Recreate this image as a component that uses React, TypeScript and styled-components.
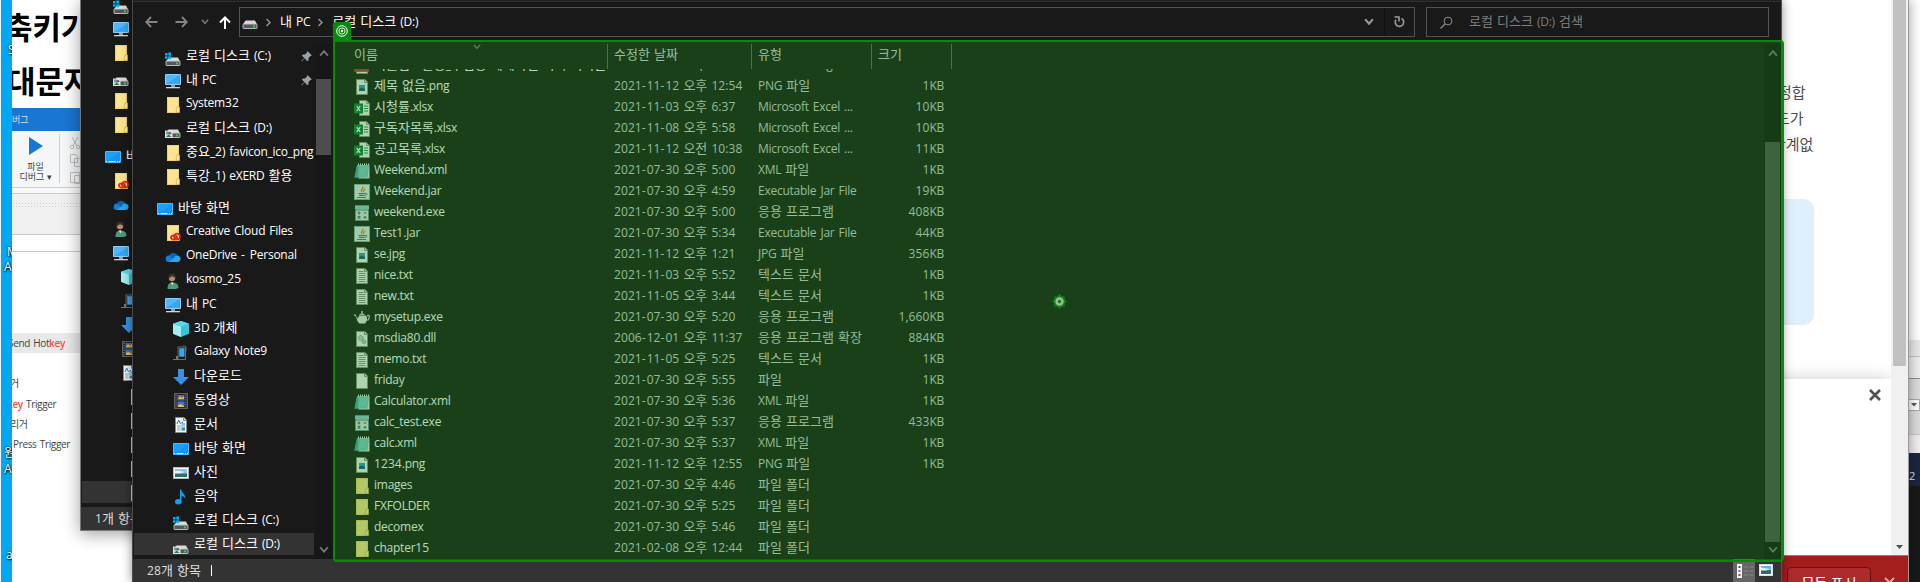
import React from 'react';
import styled, { createGlobalStyle, css } from 'styled-components';

const GlobalStyle = createGlobalStyle`
  *, *::before, *::after { box-sizing: border-box; }
  html, body { margin: 0; padding: 0; }
  body { overflow: hidden; }
  svg { display: block; flex: none; }
`;

/* ---------- text ---------- */

const Hangul = styled.span<{ $size: number }>`
  font-size: ${(p) => p.$size}px;
  letter-spacing: 0;
`;

const Digits = styled.span`
  letter-spacing: 0.08px;
`;

const TextLine = styled.span`
  font-family: 'Open Sans', 'Noto Sans CJK KR', sans-serif;
  font-size: 12px;
  line-height: 16px;
  letter-spacing: -0.25px;
  word-spacing: 1.2px;
  white-space: nowrap;
`;

const Hyphen = styled.span`
  letter-spacing: 1px;
`;

function Label({ text, size = 13 }: { text: string; size?: number }) {
  const runs = text.match(/[\uac00-\ud7a3]+|\d[\d:,]*|-|[^\uac00-\ud7a3\d-]+/g) ?? [];
  return (
    <TextLine>
      {runs.map((run, i) => {
        if (/[\uac00-\ud7a3]/.test(run)) {
          return (
            <Hangul key={i} $size={size}>
              {run}
            </Hangul>
          );
        }
        if (run === '-') return <Hyphen key={i}>-</Hyphen>;
        if (/\d/.test(run)) return <Digits key={i}>{run}</Digits>;
        return <React.Fragment key={i}>{run}</React.Fragment>;
      })}
    </TextLine>
  );
}

/* ---------- icons ---------- */

type IconName =
  | 'diskC' | 'diskD' | 'drive' | 'pc' | 'folder' | 'desktop' | 'cc' | 'onedrive' | 'user'
  | 'cube' | 'phone' | 'down' | 'video' | 'doc' | 'picture' | 'music'
  | 'png' | 'xlsx' | 'xml' | 'jar' | 'exe' | 'txt' | 'teapot' | 'dll' | 'blank' | 'pdf';

const Page = () => (
  <>
    <path d="M2.500.5h8.500l2.500 2.800v12.200h-11z" fill="#f7f7f7" stroke="#8a8a8a" />
    <path d="M10.500.5v3h3" fill="#ddd" stroke="#8a8a8a" />
  </>
);

const DriveBody = () => (
  <>
    <path d="M3.500 6.500h9.500l2 4h-14z" fill="#d9d9d9" />
    <rect x="1" y="10" width="14" height="4.500" rx=".6" fill="#55585a" stroke="#c9c9c9" strokeWidth=".9" />
    <rect x="11" y="11.500" width="2" height="1.800" fill="#2de03c" />
  </>
);

const FolderBody = () => (
  <>
    <path d="M2 0h12v16H2z" fill="#ffe48f" />
    <path d="M2.500.5h11v15h-11z" fill="none" stroke="#f2cf6b" />
    <path d="M12.200 10h2.300v5.500h-3.200v-3z" fill="#ffe9a6" stroke="#d9b23f" strokeWidth=".8" />
  </>
);

const glyphs: Record<IconName, React.ReactNode> = {
  diskC: (
    <>
      <DriveBody />
      <path d="M0 2h2.500v2.500H0zM3.300 1.500H6v3H3.300zM0 5.200h2.500v2.600H0zM3.300 5.200H6v3H3.300z" fill="#00b7f1" />
    </>
  ),
  diskD: (
    <>
      <DriveBody />
      <rect x="0" y="7.500" width="7.500" height="7.500" fill="#dfe3e5" />
      <path d="M1 8.500h3v3H1z" fill="#6f9ab5" />
      <path d="M1 14l2.500-2.500 3 2.500z" fill="#32705a" />
      <circle cx="5" cy="10.300" r="1.300" fill="#7d5546" />
    </>
  ),
  drive: <DriveBody />,
  pc: (
    <>
      <path d="M.5 1.500h15v10H.5z" fill="#4db8fb" stroke="#8fcdf2" />
      <path d="M1 11L15 2v9z" fill="#2f9df0" opacity=".7" />
      <path d="M6 12h4v2H6z" fill="#8ea1ad" />
      <path d="M1 14h14v1.300H1z" fill="#cfd8dd" />
    </>
  ),
  folder: <FolderBody />,
  desktop: (
    <>
      <path d="M.5 2.500h15v11H.5z" fill="#1aa1fb" stroke="#4cb9ff" />
      <path d="M1 13L15 3v10z" fill="#0b8cec" opacity=".6" />
      <path d="M1 12.500h14" stroke="#cfeaff" strokeDasharray="1 1.500 7 1.500 1 1" />
    </>
  ),
  cc: (
    <>
      <FolderBody />
      <g fill="none" stroke="#e2231a" strokeWidth="1.700">
        <ellipse cx="9" cy="12.500" rx="3" ry="2.100" />
        <ellipse cx="12" cy="11.500" rx="3" ry="2.800" />
      </g>
      <path d="M9 11.500l3.500 2" stroke="#e2231a" strokeWidth="1.300" />
    </>
  ),
  onedrive: (
    <>
      <path d="M3.500 8a4.800 4.800 0 0 1 9-1.500l-4 5z" fill="#0a64b8" />
      <path d="M3.300 13A3.300 3.300 0 0 1 3.500 6.500L11 12z" fill="#1081d6" />
      <path d="M9 9a3.500 3.500 0 0 1 4-2.300 3.200 3.200 0 0 1 0 6.300H3.500z" fill="#2aa5ee" />
    </>
  ),
  user: (
    <>
      <path d="M2.500 16c0-5 2-6.500 4.500-6.500S13.500 10 13.500 15l-3 1z" fill="#4f9a78" />
      <path d="M6 9.500l1.500 3 1-3z" fill="#e6efe9" />
      <circle cx="7" cy="5" r="3.200" fill="#b98a6c" />
      <path d="M3.500 6C3 1 6 0 8 .5s3 2 2 4.500C9 3 6 3 5 4.500z" fill="#3a2f2b" />
    </>
  ),
  cube: (
    <>
      <path d="M8 0l8 2.800v10L8 16l-8-3.200v-10z" fill="#35c4d8" />
      <path d="M0 2.800L8 5.500V16l-8-3.200z" fill="#a3eef3" />
      <path d="M0 2.800L8 0l8 2.800-8 2.700z" fill="#5cdbe6" />
    </>
  ),
  phone: (
    <>
      <path d="M9 1.500c4-2.500 6 1 4 5" fill="none" stroke="#444" />
      <rect x="5" y="2" width="7.500" height="12.500" fill="#1b1b1b" stroke="#6b6b6b" />
      <rect x="6.200" y="3.200" width="5.300" height="8.500" fill="#3ba4f2" />
      <path d="M0 14h3v-3h2v4H0z" fill="#777" />
    </>
  ),
  down: <path d="M5 0h6v8h5l-8 8-8-8h5z" fill="#3592e6" />,
  video: (
    <>
      <rect x="1.500" y=".5" width="13" height="15" fill="#242424" stroke="#5f5f5f" />
      <path d="M3 1.500v13M13 1.500v13" stroke="#8b8b8b" strokeWidth="1.200" strokeDasharray="1.200 1.200" />
      <rect x="4.500" y="2" width="7" height="5.500" fill="#4d67bd" />
      <rect x="4.500" y="8.500" width="7" height="5.500" fill="#3a75d4" />
      <path d="M5 6l2-3 2 2 2-2v3z" fill="#e3bf36" />
      <path d="M5 12l3-1 3 2v1H5z" fill="#e9c13b" />
    </>
  ),
  doc: (
    <>
      <Page />
      <path d="M4 7l1.700-4L7.500 7M8.500 5.500H10M8.500 7H12" stroke="#1f7cc7" fill="none" />
      <path d="M4 9h8M4 11h3.500M4 13h3.500" stroke="#6ea9d4" />
      <rect x="8.500" y="10.500" width="3.500" height="3" fill="#3f8b8c" />
    </>
  ),
  picture: (
    <>
      <rect x=".5" y="2.500" width="15" height="11" fill="#f8f8f8" stroke="#b9b9b9" />
      <rect x="2" y="4" width="12" height="8" fill="#8ec2ea" />
      <path d="M2 8c4-1.500 6 1 12 .5V12H2z" fill="#34706b" />
      <path d="M2 6.500c3-2 7 1 10 0l-4 2H2z" fill="#e9f4fb" />
    </>
  ),
  music: (
    <>
      <path d="M8.200 1c.8 3.200 4.500 4 4 9-.7-2-2-3-4-3.200z" fill="#10a0f5" />
      <path d="M7.700.5v12" stroke="#10a0f5" strokeWidth="1.500" />
      <ellipse cx="5.300" cy="12.800" rx="3.300" ry="2.700" fill="#10a0f5" />
    </>
  ),
  png: (
    <>
      <Page />
      <rect x="5" y="6" width="6" height="6" fill="#2d97d3" />
      <path d="M5 10l2.500-1.500L11 10v2H5z" fill="#17517c" />
    </>
  ),
  xlsx: (
    <>
      <path d="M5.500.5h7l3 3v12h-10z" fill="#f7f7f7" stroke="#8a8a8a" />
      <path d="M12.500.5v3h3" fill="none" stroke="#8a8a8a" />
      <path d="M10 6h4M10 8.500h4M10 11h4" stroke="#23915c" strokeWidth="1.200" />
      <rect x="0" y="3.500" width="9" height="10" fill="#0f7a3e" />
      <path d="M2.800 6l3.400 5M6.200 6l-3.400 5" stroke="#fff" strokeWidth="1.300" />
    </>
  ),
  xml: (
    <>
      <path d="M4 15.500h11.500V2z" fill="#e0e4e2" />
      <path d="M3 2h12l-1.500 12.500H.5z" fill="#74c6c8" />
      <path d="M3 2L.5 14.500h3L4.500 2z" fill="#4c9fa6" />
      <path d="M4 1.500h11" stroke="#e8eeee" strokeWidth="2" strokeDasharray="1 1" />
      <path d="M6 5h7M6 7h7M5.500 9h7M5.500 11h7" stroke="#a3dedd" strokeWidth=".6" />
    </>
  ),
  jar: (
    <>
      <rect x=".5" y=".5" width="15" height="15" fill="#e4eaf0" stroke="#8fa8ba" />
      <path d="M8 8c-2.500-2 2-3.500 .8-5.500M9.500 8c-1-1.500 1.500-2 1.500-3.500" fill="none" stroke="#e0871d" strokeWidth="1.300" />
      <path d="M4.500 9.500h6.500M5 11.300h5.500M3 13.500h9" stroke="#4a6f8c" strokeWidth="1.200" />
      <path d="M11 9.500c2.500-.8 2.500 1.800 0 2" fill="none" stroke="#4a6f8c" />
    </>
  ),
  exe: (
    <>
      <rect x="1.500" y=".5" width="13" height="15" fill="#dfe7ea" stroke="#6f8c96" />
      <rect x="1" y="1" width="14" height="3" fill="#8fcdd2" />
      <path d="M1 5h14" stroke="#56747c" />
      <path d="M3.500 8h3M5 6.500v3M9.500 8h3M3.700 11l2.600 2.600M6.300 11l-2.600 2.600M9.500 12.300h3M11 10.900v2.800" stroke="#4c5f66" strokeWidth="1.100" />
    </>
  ),
  txt: (
    <>
      <Page />
      <path d="M4.500 3.500h5M4.500 5.500h7M4.500 7.500h7M4.500 9.500h7M4.500 11.500h7M4.500 13.500h7" stroke="#7d8487" strokeWidth=".9" />
    </>
  ),
  teapot: (
    <>
      <path d="M2 6L0 4.500M13 6c3-2 3 2 .5 4.500" fill="none" stroke="#d8dcd9" strokeWidth="1.200" />
      <path d="M1 4.500l3 4 1-3h7c2 3 1 6-1 8H5.500C3.500 12 3 10 2.500 8z" fill="#e3e7e4" />
      <path d="M5 5c1-2 5-2 6 0z" fill="#c9d0cc" />
      <rect x="7.300" y="1" width="1.400" height="2.600" fill="#e3e7e4" />
    </>
  ),
  dll: (
    <>
      <Page />
      <circle cx="6.800" cy="7" r="2.600" fill="#c4cdd2" stroke="#7d8d96" strokeDasharray="1 .6" />
      <circle cx="10" cy="10.800" r="2" fill="#a9c9d3" stroke="#7d8d96" strokeDasharray="1 .6" />
    </>
  ),
  blank: <Page />,
  pdf: (
    <>
      <Page />
      <rect x="0" y="9" width="15" height="4.800" fill="#d3222a" />
    </>
  ),
};

const Icon = ({ name }: { name: IconName }) => (
  <svg width="16" height="16" viewBox="0 0 16 16">
    {glyphs[name]}
  </svg>
);

const Chevron = ({ dir, color, size = 8, weight = 1.8 }: { dir: 'up' | 'down' | 'right'; color: string; size?: number; weight?: number }) => {
  const d = { up: 'M1 6l3.500-4L8 6', down: 'M1 2l3.500 4L8 2', right: 'M2.500 1l3.500 3.500-3.500 3.500' }[dir];
  return (
    <svg width={size} height={size} viewBox="0 0 9 9">
      <path d={d} fill="none" stroke={color} strokeWidth={weight} />
    </svg>
  );
};

/* ---------- desktop and windows behind ---------- */

const Desktop = styled.div`
  position: relative;
  width: 1920px;
  height: 582px;
  overflow: hidden;
  background: #00a8f3;
  border-left: 1px solid #eef4f8;
  font-family: 'Open Sans', 'Noto Sans CJK KR', sans-serif;
`;

const DesktopCaption = styled.span<{ $x: number; $y: number }>`
  position: absolute;
  left: ${(p) => p.$x}px;
  top: ${(p) => p.$y}px;
  font-size: 12px;
  line-height: 16px;
  color: #fff;
  text-shadow: 1px 1px 2px #000, 0 0 2px #000;
`;

const Win = styled.div<{ $x: number; $w: number; $h: number }>`
  position: absolute;
  top: 0;
  left: ${(p) => p.$x - 1}px;
  width: ${(p) => p.$w}px;
  height: ${(p) => p.$h}px;
  display: flex;
  flex-direction: column;
  overflow: hidden;
`;

const Article = styled(Win)`
  background: #fff;
`;

const Heading = styled.div<{ $shift: number }>`
  height: 54px;
  margin-left: ${(p) => p.$shift}px;
  font-family: 'Noto Sans CJK KR', sans-serif;
  font-weight: 700;
  font-size: 31px;
  line-height: 51px;
  color: #000;
  white-space: nowrap;
`;

const TabStrip = styled.div`
  height: 23px;
  background: #1976d2;
  color: #cfe3f7;
  font-size: 9px;
  line-height: 23px;
  white-space: nowrap;
`;

const Ribbon = styled.div`
  height: 57px;
  display: flex;
  background: #f5f6f7;
  border-bottom: 1px solid #c9cccf;
`;

const RibbonButton = styled.div`
  width: 47px;
  padding: 6px 0 0 0;
  display: flex;
  flex-direction: column;
  align-items: center;
  font-size: 9px;
  line-height: 10px;
  color: #444;
  white-space: nowrap;
  svg { margin-bottom: 7px; }
`;

const RibbonRule = styled.div`
  width: 1px;
  height: 49px;
  margin-top: 3px;
  background: #cfcfcf;
`;

const RibbonIcons = styled.div`
  padding: 5px 0 0 9px;
`;

const GrayBand = styled.div<{ $h: number; $bg: string }>`
  height: ${(p) => p.$h}px;
  background: ${(p) => p.$bg};
  border-bottom: 1px solid #cacaca;
`;

const Grip = styled.div`
  height: 5px;
  margin-top: 8px;
  background: radial-gradient(circle, #cfcfcf 0.8px, transparent 1px) 0 0 / 3px 3px;
`;

const CodeRow = styled.div<{ $h: number; $shift?: number; $hot?: boolean }>`
  height: ${(p) => p.$h}px;
  padding-left: ${(p) => p.$shift ?? 0}px;
  font-size: 10px;
  line-height: ${(p) => p.$h + 1}px;
  letter-spacing: -0.35px;
  word-spacing: 1px;
  color: #444;
  white-space: nowrap;
  background: ${(p) => (p.$hot ? '#e9e9e9' : 'transparent')};
  b { color: #f4523f; font-weight: 600; }
`;

const Spacer = styled.div<{ $h: number }>`
  flex: none;
  height: ${(p) => p.$h}px;
`;

const CodeText = styled.span<{ $shift: number }>`
  margin-left: ${(p) => p.$shift}px;
`;

/* ---------- explorer windows ---------- */

const BackExplorer = styled(Win)`
  background: #191919;
  border-left: 1px solid #777;
  border-bottom: 1px solid #777;
  box-shadow: 0 3px 16px rgba(0, 0, 0, 0.38);
`;

const BackTree = styled.div`
  flex: 1;
  margin-top: -8px;
`;

const TreeRow = styled.div<{ $indent: number; $selected?: boolean; $gap?: boolean }>`
  height: 24px;
  ${(p) => p.$gap && css`margin-top: 8px;`}
  padding-left: ${(p) => p.$indent}px;
  display: flex;
  align-items: center;
  gap: 5px;
  color: #fff;
  overflow: hidden;
  ${(p) =>
    p.$selected &&
    css`
      background: linear-gradient(#333, #333) 1px 1px / 180px 22px no-repeat;
    `}
  & > span { flex: 1; transform: translateY(-1px); }
`;

const IconDrop = styled.div<{ $drop: boolean }>`
  flex: none;
  margin-top: ${(p) => (p.$drop ? 5 : 1)}px;
`;

const StatusBar = styled.div`
  flex: none;
  height: 23px;
  display: flex;
  align-items: center;
  padding-left: 14px;
  color: #dedede;
  background: #333;
`;

const Caret = styled.div`
  width: 1px;
  height: 11px;
  margin-left: 10px;
  background: #fff;
`;

const ViewSwitch = styled.div`
  margin-left: auto;
  height: 100%;
  display: flex;
  align-items: flex-start;
  gap: 4px;
`;

const ViewButton = styled.div<{ $on?: boolean }>`
  width: 22px;
  height: 23px;
  padding: 5px 0 0 ${(p) => (p.$on ? 4 : 0)}px;
  background: ${(p) => (p.$on ? '#666' : 'transparent')};
`;

const Explorer = styled(Win)`
  background: #191919;
  border-left: 1px solid #4a4a4a;
  border-right: 1px solid #555;
  box-shadow: 0 0 10px rgba(0, 0, 0, 0.45);
`;

const TopEdge = styled.div`
  flex: none;
  height: 2px;
  background: #202020;
  border-bottom: 1px solid #303030;
`;

const Toolbar = styled.div`
  flex: none;
  height: 42px;
  display: flex;
  align-items: flex-start;
  padding-top: 5px;
`;

const NavButtons = styled.div`
  width: 106px;
  height: 30px;
  padding-left: 12px;
  display: flex;
  align-items: center;
`;

const NavSlot = styled.div<{ $w: number }>`
  width: ${(p) => p.$w}px;
`;

const Field = styled.div<{ $w: number }>`
  width: ${(p) => p.$w}px;
  height: 30px;
  display: flex;
  align-items: center;
  border: 1px solid #535353;
  color: #fff;
  & > span { transform: translateY(-1px); }
`;

const Address = styled(Field)`
  padding-left: 2px;
  svg + svg { margin-left: 6px; }
`;

const Crumb = styled.div<{ $l: number; $r: number }>`
  display: flex;
  margin: -2px ${(p) => p.$r}px 0 ${(p) => p.$l}px;
`;

const AddressTail = styled.div`
  margin-left: auto;
  height: 28px;
  display: flex;
  align-items: center;
`;

const Refresh = styled.div`
  width: 30px;
  height: 28px;
  margin-left: 10px;
  display: flex;
  align-items: center;
  justify-content: center;
  border-left: 1px solid #111;
`;

const Search = styled(Field)`
  margin-left: 11px;
  padding-left: 13px;
  gap: 16px;
  color: #7f7f7f;
`;

const Body = styled.div`
  flex: 1;
  min-height: 0;
  display: flex;
`;

const NavPane = styled.div`
  width: 182px;
  overflow: hidden;
`;

const Pin = styled.div`
  margin-right: 3px;
`;

const Scroll = styled.div<{ $bg: string }>`
  width: 17px;
  padding: 5px 1px 4px;
  display: flex;
  flex-direction: column;
  align-items: center;
  background: ${(p) => p.$bg};
`;

const Thumb = styled.div<{ $top: number; $h: number }>`
  width: 15px;
  height: ${(p) => p.$h}px;
  margin-top: ${(p) => p.$top}px;
  margin-bottom: auto;
  background: #4d4d4d;
`;

const FilePane = styled.div`
  flex: 1;
  display: flex;
  flex-direction: column;
  overflow: hidden;
`;

const columns = '254px 144px 120px 80px';

const HeaderRow = styled.div`
  position: relative;
  flex: none;
  height: 25px;
  display: grid;
  grid-template-columns: ${columns};
  padding-left: 22px;
  color: #d4d4d4;
`;

const HeaderCell = styled.div`
  padding: 0 0 4px 6px;
  display: flex;
  align-items: center;
  border-right: 1px solid #636363;
  &:first-child { padding-left: 0; }
`;

const SortMark = styled.div`
  position: absolute;
  left: 141px;
  top: -1px;
`;

const Files = styled.div`
  flex: 1;
  min-height: 0;
  overflow: hidden;
`;

const FileRow = styled.div`
  height: 21px;
  display: grid;
  grid-template-columns: ${columns};
  align-items: center;
  padding-left: 22px;
  color: #d2d2d2;
  &:first-child { margin-top: -14px; }
`;

const Cell = styled.div<{ $right?: boolean }>`
  padding: 0 ${(p) => (p.$right ? 8 : 0)}px 2px 6px;
  display: flex;
  white-space: nowrap;
  justify-content: ${(p) => (p.$right ? 'flex-end' : 'flex-start')};
`;

const NameCell = styled.div`
  display: flex;
  align-items: center;
  gap: 4px;
  color: #fff;
  & > span { transform: translateY(-1px); }
`;

/* ---------- browser at the right ---------- */

const Browser = styled(Win)`
  background: #fff;
  border-right: 1px solid #9a9a9a;
  box-shadow: 0 0 12px rgba(0, 0, 0, 0.4);
`;

const BrowserView = styled.div`
  height: 555px;
  display: flex;
`;

const WebPage = styled.div`
  width: 191px;
  display: flex;
  flex-direction: column;
  padding-top: 79px;
`;

const Prose = styled.div<{ $x: number }>`
  height: 26px;
  padding-left: ${(p) => p.$x}px;
  font-size: 15px;
  line-height: 26px;
  color: #4a4d52;
  white-space: nowrap;
`;

const Callout = styled.div`
  width: 114px;
  height: 126px;
  margin-top: 42px;
  border-radius: 10px;
  background: #e0effc;
`;

const Sheet = styled.div`
  height: 176px;
  margin-top: auto;
  padding: 10px 10px 0 0;
  display: flex;
  justify-content: flex-end;
  align-items: flex-start;
  background: #fff;
  box-shadow: 0 0 16px rgba(0, 0, 0, 0.2);
`;

const LightScroll = styled.div`
  position: relative;
  width: 17px;
  display: flex;
  flex-direction: column;
  align-items: center;
  padding-bottom: 6px;
  background: #f0f0f0;
`;

const LightThumb = styled.div`
  width: 13px;
  height: 366px;
  margin-bottom: auto;
  background: #c1c1c1;
`;

const RedBar = styled.div`
  height: 27px;
  display: flex;
  align-items: flex-start;
  padding: 11px 0 0 87px;
  background: #a61d1e;
  border-top: 1px solid #bb6a6a;
`;

const RedButton = styled.div`
  width: 84px;
  height: 32px;
  border: 1px solid #651515;
  border-radius: 4px;
  background: #ad2b2c;
  color: #fff;
  font-size: 14px;
  line-height: 30px;
  text-align: center;
  white-space: nowrap;
`;

const RedClose = styled.div`
  margin: 10px 0 0 13px;
`;

const EdgeApps = styled(Win)`
  background: #fff;
`;

const Strip = styled.div<{ $h: number; $bg: string; $line?: string }>`
  flex: none;
  height: ${(p) => p.$h}px;
  background: ${(p) => p.$bg};
  border-bottom: ${(p) => (p.$line ? `1px solid ${p.$line}` : '0')};
`;

const MiniSelect = styled.div`
  height: 12px;
  margin-top: 19px;
  display: flex;
  align-items: center;
  justify-content: center;
  border: 1px solid #aaa;
  background: #fff;
`;

const NavyStrip = styled.div`
  height: 33px;
  padding: 14px 0 0 1px;
  background: #1b2740;
  color: #e3e6ec;
  font-size: 11px;
  line-height: 18px;
`;

/* ---------- region marker ---------- */

const Region = styled.div`
  position: absolute;
  left: 332px;
  top: 40px;
  width: 1451px;
  height: 522px;
  border: 2px solid #078a0b;
  border-radius: 0 4px 4px 4px;
  background: rgba(28, 144, 28, 0.335);
  background-clip: padding-box;
`;

const RegionBadge = styled.div`
  position: absolute;
  left: -2px;
  top: -20px;
  width: 18px;
  height: 20px;
  padding: 3px 0 0 3px;
  border-radius: 3px 3px 0 0;
  background: #078a0b;
`;

const RegionTarget = styled.div`
  position: absolute;
  left: 717px;
  top: 252px;
`;

/* ---------- data ---------- */

type TreeItem = { icon: IconName; text: string; level: number; pin?: boolean; gap?: boolean; selected?: boolean };

const tree: TreeItem[] = [
  { icon: 'diskC', text: '로컬 디스크 (C:)', level: 1, pin: true },
  { icon: 'pc', text: '내 PC', level: 1, pin: true },
  { icon: 'folder', text: 'System32', level: 1 },
  { icon: 'diskD', text: '로컬 디스크 (D:)', level: 1 },
  { icon: 'folder', text: '중요_2) favicon_ico_png', level: 1 },
  { icon: 'folder', text: '특강_1) eXERD 활용', level: 1 },
  { icon: 'desktop', text: '바탕 화면', level: 0, gap: true },
  { icon: 'cc', text: 'Creative Cloud Files', level: 1 },
  { icon: 'onedrive', text: 'OneDrive - Personal', level: 1 },
  { icon: 'user', text: 'kosmo_25', level: 1 },
  { icon: 'pc', text: '내 PC', level: 1 },
  { icon: 'cube', text: '3D 개체', level: 2 },
  { icon: 'phone', text: 'Galaxy Note9', level: 2 },
  { icon: 'down', text: '다운로드', level: 2 },
  { icon: 'video', text: '동영상', level: 2 },
  { icon: 'doc', text: '문서', level: 2 },
  { icon: 'desktop', text: '바탕 화면', level: 2 },
  { icon: 'picture', text: '사진', level: 2 },
  { icon: 'music', text: '음악', level: 2 },
  { icon: 'diskC', text: '로컬 디스크 (C:)', level: 2 },
  { icon: 'diskD', text: '로컬 디스크 (D:)', level: 2, selected: true },
];

type BackItem = { icon: IconName; indent: number; gap?: boolean; text?: string; selected?: boolean };

const backTree: BackItem[] = [
  { icon: 'diskC', indent: 32 },
  { icon: 'pc', indent: 32 },
  { icon: 'folder', indent: 32 },
  { icon: 'diskD', indent: 32 },
  { icon: 'folder', indent: 32 },
  { icon: 'folder', indent: 32 },
  { icon: 'desktop', indent: 24, gap: true, text: '바' },
  { icon: 'cc', indent: 32 },
  { icon: 'onedrive', indent: 32 },
  { icon: 'user', indent: 32 },
  { icon: 'pc', indent: 32 },
  { icon: 'cube', indent: 40 },
  { icon: 'phone', indent: 40 },
  { icon: 'down', indent: 40 },
  { icon: 'video', indent: 40 },
  { icon: 'doc', indent: 40 },
  { icon: 'folder', indent: 48 },
  { icon: 'folder', indent: 48 },
  { icon: 'folder', indent: 48 },
  { icon: 'folder', indent: 48 },
  { icon: 'folder', indent: 48, selected: true },
];

const files: [IconName, string, string, string, string][] = [
  ['pdf', '이클립스활용_수업용 예제파일 목록 복사본', '2021-11-12 오후 5:20', 'Microsoft Edge P...', ''],
  ['png', '제목 없음.png', '2021-11-12 오후 12:54', 'PNG 파일', '1KB'],
  ['xlsx', '시청률.xlsx', '2021-11-03 오후 6:37', 'Microsoft Excel ...', '10KB'],
  ['xlsx', '구독자목록.xlsx', '2021-11-08 오후 5:58', 'Microsoft Excel ...', '10KB'],
  ['xlsx', '공고목록.xlsx', '2021-11-12 오전 10:38', 'Microsoft Excel ...', '11KB'],
  ['xml', 'Weekend.xml', '2021-07-30 오후 5:00', 'XML 파일', '1KB'],
  ['jar', 'Weekend.jar', '2021-07-30 오후 4:59', 'Executable Jar File', '19KB'],
  ['exe', 'weekend.exe', '2021-07-30 오후 5:00', '응용 프로그램', '408KB'],
  ['jar', 'Test1.jar', '2021-07-30 오후 5:34', 'Executable Jar File', '44KB'],
  ['png', 'se.jpg', '2021-11-12 오후 1:21', 'JPG 파일', '356KB'],
  ['txt', 'nice.txt', '2021-11-03 오후 5:52', '텍스트 문서', '1KB'],
  ['txt', 'new.txt', '2021-11-05 오후 3:44', '텍스트 문서', '1KB'],
  ['teapot', 'mysetup.exe', '2021-07-30 오후 5:20', '응용 프로그램', '1,660KB'],
  ['dll', 'msdia80.dll', '2006-12-01 오후 11:37', '응용 프로그램 확장', '884KB'],
  ['txt', 'memo.txt', '2021-11-05 오후 5:25', '텍스트 문서', '1KB'],
  ['blank', 'friday', '2021-07-30 오후 5:55', '파일', '1KB'],
  ['xml', 'Calculator.xml', '2021-07-30 오후 5:36', 'XML 파일', '1KB'],
  ['exe', 'calc_test.exe', '2021-07-30 오후 5:37', '응용 프로그램', '433KB'],
  ['xml', 'calc.xml', '2021-07-30 오후 5:37', 'XML 파일', '1KB'],
  ['png', '1234.png', '2021-11-12 오후 12:55', 'PNG 파일', '1KB'],
  ['folder', 'images', '2021-07-30 오후 4:46', '파일 폴더', ''],
  ['folder', 'FXFOLDER', '2021-07-30 오후 5:25', '파일 폴더', ''],
  ['folder', 'decomex', '2021-07-30 오후 5:46', '파일 폴더', ''],
  ['folder', 'chapter15', '2021-02-08 오후 12:44', '파일 폴더', ''],
];

const isDrive = (icon: IconName) => icon === 'diskC' || icon === 'diskD';

/* ---------- sections ---------- */

const ArticleWindow = () => (
  <Article $x={12} $w={200} $h={582}>
    <Heading $shift={-8}>축키가</Heading>
    <Heading $shift={-5}>대문자</Heading>
    <TabStrip>버그</TabStrip>
    <Ribbon>
      <RibbonButton>
        <svg width="14" height="18" viewBox="0 0 14 18">
          <path d="M0 0l14 9-14 9z" fill="#1976d2" />
        </svg>
        <span>파일</span>
        <span>디버그 ▾</span>
      </RibbonButton>
      <RibbonRule />
      <RibbonIcons>
        <svg width="16" height="50" viewBox="0 0 16 50" fill="none" stroke="#bdbdbd">
          <path d="M3 1l5 9M9 1L4 10" />
          <circle cx="3" cy="11" r="1.700" />
          <circle cx="9" cy="11" r="1.700" />
          <path d="M1.500 18.500h5l2 2v6h-7zM5.500 22.500h5l2 2v6h-7zM1.500 36.500h9v10h-9zM5.500 39.500h8v8h-8z" fill="#f5f6f7" />
        </svg>
      </RibbonIcons>
    </Ribbon>
    <GrayBand $h={6} $bg="#f8f8f8" />
    <GrayBand $h={41} $bg="#f0f0f0">
      <Grip />
    </GrayBand>
    <GrayBand $h={17} $bg="#fff" />
    <Spacer $h={81} />
    <CodeRow $h={20} $hot>
      <CodeText $shift={-4}>Send Hot<b>key</b></CodeText>
    </CodeRow>
    <Spacer $h={20} />
    <CodeRow $h={20}>
      <CodeText $shift={-2}>거</CodeText>
    </CodeRow>
    <CodeRow $h={22}>
      <CodeText $shift={-5}><b>key</b> Trigger</CodeText>
    </CodeRow>
    <CodeRow $h={18}>
      <CodeText $shift={-2}>리거</CodeText>
    </CodeRow>
    <CodeRow $h={22} $shift={1}>Press Trigger</CodeRow>
  </Article>
);

const BackExplorerWindow = () => (
  <BackExplorer $x={80} $w={300} $h={531}>
    <BackTree>
      {backTree.map((item, i) => (
        <TreeRow key={i} $indent={item.indent} $gap={item.gap} $selected={item.selected}>
          <IconDrop $drop={isDrive(item.icon)}>
            <Icon name={item.icon} />
          </IconDrop>
          {item.text && <Label text={item.text} />}
        </TreeRow>
      ))}
    </BackTree>
    <StatusBar>
      <Label text="1개 항목" />
    </StatusBar>
  </BackExplorer>
);

const BrowserWindow = () => (
  <Browser $x={1700} $w={209} $h={582}>
    <BrowserView>
      <WebPage>
        <Prose $x={78}>정합</Prose>
        <Prose $x={76}>도가</Prose>
        <Prose $x={72}>관계없</Prose>
        <Callout />
        <Sheet>
          <svg width="12" height="12" viewBox="0 0 12 12">
            <path d="M1 1l10 10M11 1L1 11" stroke="#505050" strokeWidth="2.600" />
          </svg>
        </Sheet>
      </WebPage>
      <LightScroll>
        <LightThumb />
        <svg width="7" height="4" viewBox="0 0 7 4">
          <path d="M0 0h7L3.500 4z" fill="#505050" />
        </svg>
      </LightScroll>
    </BrowserView>
    <RedBar>
      <RedButton>모두 표시</RedButton>
      <RedClose>
        <svg width="11" height="11" viewBox="0 0 11 11">
          <path d="M1 1l9 9M10 1L1 10" stroke="#d9a9a9" strokeWidth="2" />
        </svg>
      </RedClose>
    </RedBar>
  </Browser>
);

const EdgeWindow = () => (
  <EdgeApps $x={1900} $w={20} $h={582}>
    <Strip $h={340} $bg="#fff" />
    <Strip $h={17} $bg="#e9e9e9" $line="#c4c4c4" />
    <Strip $h={22} $bg="#efefef" $line="#8d8d8d" />
    <Strip $h={56} $bg="#dcdcdf" $line="#c4c4c4">
      <Spacer $h={1} />
      <MiniSelect>
        <svg width="26" height="4" viewBox="0 0 26 4">
          <path d="M14 0h6l-3 3.500z" fill="#555" />
        </svg>
      </MiniSelect>
    </Strip>
    <Strip $h={18} $bg="#f3eeee" />
    <NavyStrip>
      <CodeText $shift={8}>2</CodeText>
    </NavyStrip>
    <Strip $h={96} $bg="#191919" />
  </EdgeApps>
);

const ExplorerToolbar = () => (
  <Toolbar>
    <NavButtons>
      <NavSlot $w={30}>
        <svg width="13" height="12" viewBox="0 0 13 12">
          <path d="M6 1L1.200 6 6 11M1.500 6h11" fill="none" stroke="#848484" strokeWidth="1.900" />
        </svg>
      </NavSlot>
      <NavSlot $w={26}>
        <svg width="13" height="12" viewBox="0 0 13 12">
          <path d="M7 1l4.800 5L7 11M11.500 6H.5" fill="none" stroke="#848484" strokeWidth="1.900" />
        </svg>
      </NavSlot>
      <NavSlot $w={18}>
        <Chevron dir="down" color="#777" />
      </NavSlot>
      <svg width="12" height="13" viewBox="0 0 12 13">
        <path d="M1 6.500L6 1.500l5 5M6 2v11" fill="none" stroke="#fff" strokeWidth="2" />
      </svg>
    </NavButtons>
    <Address $w={1176}>
      <Icon name="drive" />
      <Chevron dir="right" color="#999" size={9} weight={1.4} />
      <Crumb $l={7} $r={6}>
        <Label text="내 PC" />
      </Crumb>
      <Chevron dir="right" color="#999" size={9} weight={1.4} />
      <Crumb $l={7} $r={0}>
        <Label text="로컬 디스크 (D:)" />
      </Crumb>
      <AddressTail>
        <Chevron dir="down" color="#999" size={10} />
        <Refresh>
          <svg width="11" height="12" viewBox="0 0 11 12">
            <path d="M7.500 2.500A4.200 4.200 0 1 1 2 3.800" fill="none" stroke="#9c9c9c" strokeWidth="1.600" />
            <path d="M.5 1h4.500v4.500" fill="none" stroke="#9c9c9c" strokeWidth="1.600" />
          </svg>
        </Refresh>
      </AddressTail>
    </Address>
    <Search $w={343}>
      <svg width="13" height="13" viewBox="0 0 13 13">
        <circle cx="8" cy="5" r="3.900" fill="none" stroke="#8d8d8d" />
        <path d="M5 8L.5 12.500" stroke="#8d8d8d" strokeWidth="1.200" />
      </svg>
      <Label text="로컬 디스크 (D:) 검색" />
    </Search>
  </Toolbar>
);

const ExplorerWindow = () => (
  <Explorer $x={132} $w={1650} $h={582}>
    <TopEdge />
    <ExplorerToolbar />
    <Body>
      <NavPane>
        {tree.map((item, i) => (
          <TreeRow key={i} $indent={24 + item.level * 8} $gap={item.gap} $selected={item.selected}>
            <IconDrop $drop={isDrive(item.icon)}>
              <Icon name={item.icon} />
            </IconDrop>
            <Label text={item.text} />
            {item.pin && (
              <Pin>
                <svg width="11" height="11" viewBox="0 0 11 11">
                  <path d="M6.500 0L11 4.500l-1.500.5-2 2 0 2.500L6 10 3.700 7.300.8 10.500.3 10 3.400 7 1 4.800l.6-1.200L4 3.500l2-2z" fill="#9aa3ab" />
                </svg>
              </Pin>
            )}
          </TreeRow>
        ))}
      </NavPane>
      <Scroll $bg="#171717">
        <Chevron dir="up" color="#7a7a7a" size={10} weight={1.6} />
        <Thumb $top={20} $h={76} />
        <Chevron dir="down" color="#7a7a7a" size={10} weight={1.6} />
      </Scroll>
      <FilePane>
        <HeaderRow>
          <HeaderCell><Label text="이름" /></HeaderCell>
          <HeaderCell><Label text="수정한 날짜" /></HeaderCell>
          <HeaderCell><Label text="유형" /></HeaderCell>
          <HeaderCell><Label text="크기" /></HeaderCell>
          <SortMark>
            <Chevron dir="down" color="#8a8a8a" weight={1.2} />
          </SortMark>
        </HeaderRow>
        <Files>
          {files.map(([icon, name, date, kind, size]) => (
            <FileRow key={name}>
              <NameCell>
                <Icon name={icon} />
                <Label text={name} />
              </NameCell>
              <Cell><Label text={date} /></Cell>
              <Cell><Label text={kind} /></Cell>
              <Cell $right><Label text={size} /></Cell>
            </FileRow>
          ))}
        </Files>
      </FilePane>
      <Scroll $bg="#111">
        <Chevron dir="up" color="#7a7a7a" size={10} weight={1.6} />
        <Thumb $top={83} $h={400} />
        <Chevron dir="down" color="#7a7a7a" size={10} weight={1.6} />
      </Scroll>
    </Body>
    <StatusBar>
      <Label text="28개 항목" />
      <Caret />
      <ViewSwitch>
        <ViewButton $on>
          <svg width="17" height="14" viewBox="0 0 17 14">
            <path d="M0 0h5v14H0z" fill="#f4f4f4" />
            <path d="M1.500 2h2v2h-2z" fill="#555" />
            <path d="M1.500 6h2v2h-2z" fill="#3a8fd0" />
            <path d="M1.500 10h2v2h-2z" fill="#c33" />
            <path d="M6.500 3h10M6.500 7h10M6.500 11h10" stroke="#8a8a8a" strokeDasharray="4.500 1.500" />
          </svg>
        </ViewButton>
        <ViewButton>
          <svg width="14" height="12" viewBox="0 0 14 12">
            <rect x=".5" y=".5" width="13" height="11" fill="#f8f8f8" stroke="#ddd" />
            <rect x="2" y="2" width="10" height="8" fill="#66aee8" />
            <path d="M2 6c4-1 6 1 10 0v4H2z" fill="#2c6d63" />
            <path d="M2 4c3-1 6 1 9 1l-4 1.500H2z" fill="#e6f3fb" />
          </svg>
        </ViewButton>
      </ViewSwitch>
    </StatusBar>
  </Explorer>
);

const RegionOverlay = () => (
  <Region>
    <RegionBadge>
      <svg width="12" height="12" viewBox="0 0 12 12" fill="none" stroke="#fff">
        <circle cx="6" cy="6" r="5.300" />
        <circle cx="6" cy="6" r="3.100" strokeWidth=".9" />
        <circle cx="6" cy="6" r="1.200" fill="#fff" stroke="none" />
      </svg>
    </RegionBadge>
    <RegionTarget>
      <svg width="15" height="15" viewBox="0 0 15 15">
        <path d="M7.500 0l2.200 2.300 3 .1.100 3L15 7.500l-2.200 2.100-.1 3-3 .1-2.200 2.300-2.200-2.300-3-.1-.1-3L0 7.500l2.200-2.100.1-3 3-.1z" fill="#0c8410" />
        <circle cx="7.500" cy="7.500" r="3" fill="none" stroke="#a9b5a9" strokeWidth="2.400" />
      </svg>
    </RegionTarget>
  </Region>
);

export default function App() {
  return (
    <>
      <GlobalStyle />
      <Desktop>
        <DesktopCaption $x={7} $y={42}>S</DesktopCaption>
        <DesktopCaption $x={6} $y={244}>M</DesktopCaption>
        <DesktopCaption $x={3} $y={259}>A</DesktopCaption>
        <DesktopCaption $x={3} $y={445}>원</DesktopCaption>
        <DesktopCaption $x={3} $y={461}>A</DesktopCaption>
        <DesktopCaption $x={5} $y={547}>a</DesktopCaption>
        <ArticleWindow />
        <EdgeWindow />
        <BrowserWindow />
        <BackExplorerWindow />
        <ExplorerWindow />
        <RegionOverlay />
      </Desktop>
    </>
  );
}
